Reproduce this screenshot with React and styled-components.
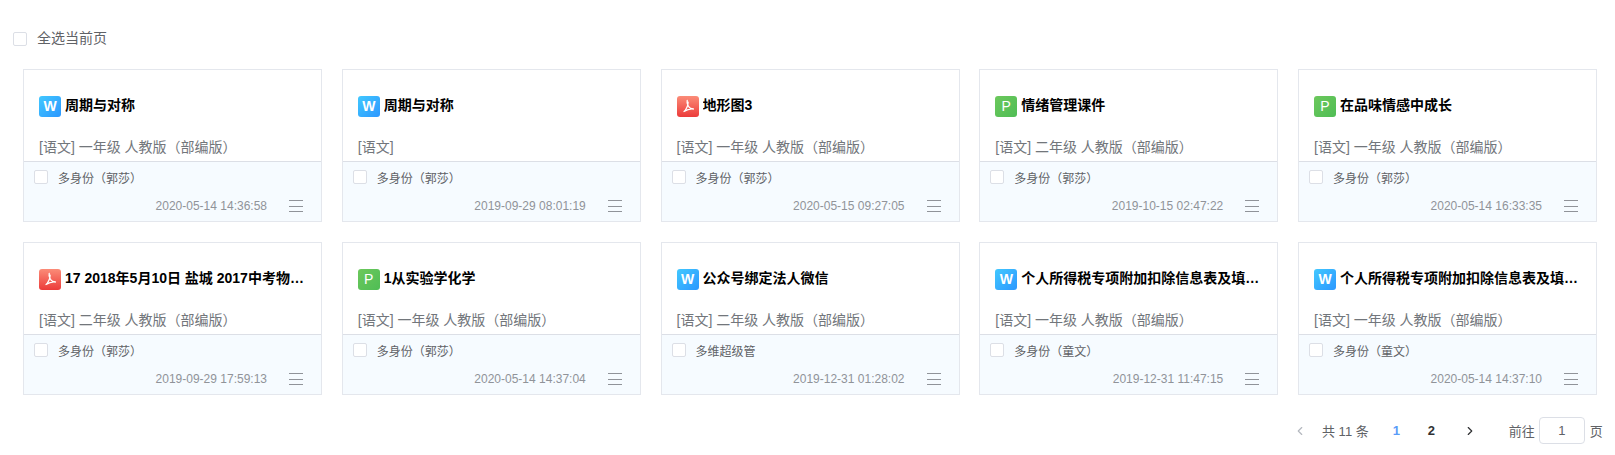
import React from "react";
import styled, { createGlobalStyle } from "styled-components";
import { ChevronLeft, ChevronRight } from "lucide-react";

const GlobalStyle = createGlobalStyle`
  html, body {
    margin: 0;
    padding: 0;
    background: #fff;
    font-family: "Liberation Sans", "Noto Sans CJK SC", sans-serif;
  }
`;

const Page = styled.div`
  width: 1615px;
  height: 455px;
  overflow: hidden;
  box-sizing: border-box;
  padding-top: 32px;
`;

const SelectAll = styled.div`
  display: flex;
  align-items: center;
  height: 14px;
  padding-left: 13px;
  margin-bottom: 23px;
  font-size: 14px;
  line-height: 14px;
  color: #606266;
`;

const SelectLabel = styled.span`
  margin-top: -2px;
`;

const Checkbox = styled.span`
  display: block;
  flex: none;
  width: 14px;
  height: 14px;
  box-sizing: border-box;
  background: #fff;
  border: 1px solid #dcdfe6;
  border-radius: 2px;
  margin-right: ${(p) => p.$gap}px;
`;

const CardGrid = styled.div`
  display: grid;
  grid-template-columns: repeat(5, 299px);
  column-gap: 19.75px;
  row-gap: 20px;
  padding-left: 23px;
`;

const Card = styled.div`
  height: 153px;
  box-sizing: border-box;
  border: 1px solid #e4e7ed;
  display: flex;
  flex-direction: column;
`;

const CardBody = styled.div`
  height: 91px;
  flex: none;
  box-sizing: border-box;
  padding: 25px 15px 0;
`;

const TitleRow = styled.div`
  display: flex;
  align-items: center;
  height: 22px;
  margin-bottom: 20px;
`;

const badgeColors = {
  W: "linear-gradient(135deg, #41c8ff, #2c97ff)",
  P: "linear-gradient(135deg, #6cc85c, #4fbd55)",
  F: "linear-gradient(180deg, #fb8c78, #ec3b3a)",
};

const Badge = styled.span`
  flex: none;
  width: 22px;
  height: 21px;
  margin-right: 4px;
  border-radius: 3px;
  background: ${(p) => badgeColors[p.$kind]};
  color: #fff;
  font-size: 14px;
  font-weight: ${(p) => (p.$kind === "W" ? 700 : 400)};
  display: flex;
  align-items: center;
  justify-content: center;
`;

const Title = styled.div`
  flex: 1;
  min-width: 0;
  margin-top: -3px;
  font-size: 14px;
  line-height: 22px;
  font-weight: 700;
  color: #000;
  white-space: nowrap;
  overflow: hidden;
  text-overflow: ellipsis;
`;

const Meta = styled.div`
  font-size: 14px;
  line-height: 20px;
  color: #72767b;
  white-space: nowrap;
`;

const CardFoot = styled.div`
  flex: 1;
  background: #f6fbff;
  border-top: 1px solid #dcdfe6;
  padding: 8px 18px 0 10px;
`;

const OwnerRow = styled.div`
  display: flex;
  align-items: center;
  height: 14px;
  font-size: 12px;
  color: #606266;
`;

const DateRow = styled.div`
  display: flex;
  justify-content: flex-end;
  align-items: center;
  margin-top: 15px;
  height: 14px;
`;

const DateText = styled.span`
  font-size: 12px;
  color: #909399;
  margin-right: 22px;
`;

const MenuLines = styled.span`
  display: flex;
  flex-direction: column;
  justify-content: space-between;
  width: 14px;
  height: 12px;

  i {
    display: block;
    height: 1px;
    background: #909399;
  }
`;

const Pager = styled.div`
  display: flex;
  align-items: center;
  height: 27px;
  margin-top: 22px;
  padding-left: 1293px;
  font-size: 13px;
  color: #606266;
`;

const Arrow = styled.span`
  display: flex;
  width: 14px;
  margin-right: ${(p) => p.$after}px;
  color: ${(p) => (p.$off ? "#b4b8bf" : "#303133")};
`;

const Total = styled.span`
  margin-right: 24px;
  white-space: nowrap;
`;

const PageNum = styled.span`
  font-weight: 700;
  width: 8px;
  margin-right: 27px;
  color: ${(p) => (p.$active ? "#5a9cf8" : "#303133")};
`;

const Jump = styled.span`
  white-space: nowrap;
`;

const JumpInput = styled.span`
  display: block;
  box-sizing: border-box;
  width: 46px;
  height: 27px;
  margin: 0 5px 0 4px;
  border: 1px solid #dcdfe6;
  border-radius: 4px;
  line-height: 25px;
  text-align: center;
`;

function PdfMark() {
  return (
    <svg width="16" height="16" viewBox="0 0 16 16" fill="none">
      <path
        d="M7.2 2.5c-.5 1.800.1 4 1.200 5.800.9 1.400 2.200 2.500 5 2.700-2.600-.4-5.600.1-9.400 2.500 2-1.500 4.200-6 4.100-9.300"
        stroke="#fff"
        strokeWidth="1.3"
        strokeLinecap="round"
        strokeLinejoin="round"
      />
    </svg>
  );
}

const files = [
  { kind: "W", title: "周期与对称", meta: "[语文] 一年级 人教版（部编版）", owner: "多身份（郭莎）", date: "2020-05-14 14:36:58" },
  { kind: "W", title: "周期与对称", meta: "[语文]", owner: "多身份（郭莎）", date: "2019-09-29 08:01:19" },
  { kind: "F", title: "地形图3", meta: "[语文] 一年级 人教版（部编版）", owner: "多身份（郭莎）", date: "2020-05-15 09:27:05" },
  { kind: "P", title: "情绪管理课件", meta: "[语文] 二年级 人教版（部编版）", owner: "多身份（郭莎）", date: "2019-10-15 02:47:22" },
  { kind: "P", title: "在品味情感中成长", meta: "[语文] 一年级 人教版（部编版）", owner: "多身份（郭莎）", date: "2020-05-14 16:33:35" },
  { kind: "F", title: "17 2018年5月10日 盐城 2017中考物理试卷", meta: "[语文] 二年级 人教版（部编版）", owner: "多身份（郭莎）", date: "2019-09-29 17:59:13" },
  { kind: "P", title: "1从实验学化学", meta: "[语文] 一年级 人教版（部编版）", owner: "多身份（郭莎）", date: "2020-05-14 14:37:04" },
  { kind: "W", title: "公众号绑定法人微信", meta: "[语文] 二年级 人教版（部编版）", owner: "多维超级管", date: "2019-12-31 01:28:02" },
  { kind: "W", title: "个人所得税专项附加扣除信息表及填写说明", meta: "[语文] 一年级 人教版（部编版）", owner: "多身份（童文）", date: "2019-12-31 11:47:15" },
  { kind: "W", title: "个人所得税专项附加扣除信息表及填写说明", meta: "[语文] 一年级 人教版（部编版）", owner: "多身份（童文）", date: "2020-05-14 14:37:10" },
];

function FileCard({ file }) {
  return (
    <Card>
      <CardBody>
        <TitleRow>
          <Badge $kind={file.kind}>{file.kind === "F" ? <PdfMark /> : file.kind}</Badge>
          <Title>{file.title}</Title>
        </TitleRow>
        <Meta>{file.meta}</Meta>
      </CardBody>
      <CardFoot>
        <OwnerRow>
          <Checkbox $gap={10} />
          {file.owner}
        </OwnerRow>
        <DateRow>
          <DateText>{file.date}</DateText>
          <MenuLines>
            <i />
            <i />
            <i />
          </MenuLines>
        </DateRow>
      </CardFoot>
    </Card>
  );
}

export default function App() {
  return (
    <Page>
      <GlobalStyle />
      <SelectAll>
        <Checkbox $gap={10} />
        <SelectLabel>全选当前页</SelectLabel>
      </SelectAll>
      <CardGrid>
        {files.map((file, i) => (
          <FileCard key={i} file={file} />
        ))}
      </CardGrid>
      <Pager>
        <Arrow $off $after={15}>
          <ChevronLeft size={14} />
        </Arrow>
        <Total>共 11 条</Total>
        <PageNum $active>1</PageNum>
        <PageNum>2</PageNum>
        <Arrow $after={32}>
          <ChevronRight size={14} />
        </Arrow>
        <Jump>前往</Jump>
        <JumpInput>1</JumpInput>
        <Jump>页</Jump>
      </Pager>
    </Page>
  );
}
